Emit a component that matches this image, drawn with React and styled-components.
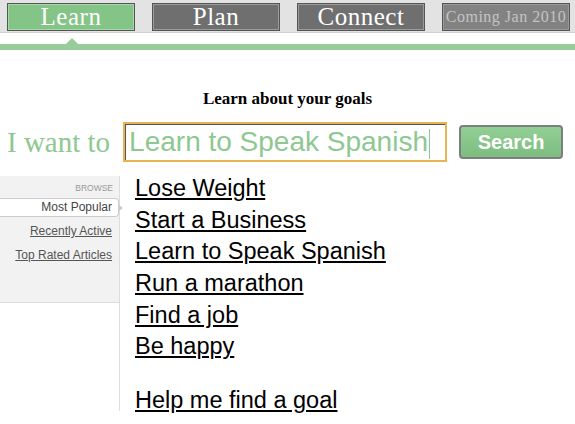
import React from "react";
import styled, { createGlobalStyle } from "styled-components";

const Global = createGlobalStyle`
  body { margin: 0; background: #fff; font-family: "Liberation Serif", serif; }
`;

const NavBar = styled.nav`
  display: flex;
  gap: 17px;
  padding: 3px 0 0 7px;
  height: 29px;
  background: #e3e3e3;
  border-bottom: 1px solid #d0d0d0;
`;

const Tab = styled.div`
  width: 126px;
  height: 26px;
  border: 1px solid #555;
  box-shadow: inset 0 0 0 1px ${(p) => (p.green ? "#a8d8aa" : "#9a9a9a")};
  background: ${(p) => (p.green ? "#84c487" : p.dim ? "#828282" : "#6f6f6f")};
  color: ${(p) => (p.dim ? "#c4c4c4" : "#fff")};
  font-family: "Liberation Serif", serif;
  font-size: ${(p) => (p.dim ? "16px" : "25px")};
  line-height: 26px;
  text-align: center;
  letter-spacing: 0.5px;
`;

const Rule = styled.div`
  position: relative;
  margin-top: 11px;
  height: 6px;
  background: #97cd9a;
  &::before {
    content: "";
    position: absolute;
    left: 66px;
    top: -6px;
    border-left: 6px solid transparent;
    border-right: 6px solid transparent;
    border-bottom: 6px solid #97cd9a;
  }
`;

const Heading = styled.h3`
  margin: 39px 0 0;
  text-align: center;
  font-size: 17px;
  font-weight: bold;
  color: #000;
`;

const SearchRow = styled.div`
  display: flex;
  align-items: center;
  margin-top: 13px;
  padding-left: 7px;
`;

const Want = styled.span`
  font-family: "Liberation Serif", serif;
  font-size: 29px;
  color: #8ec891;
  margin-right: 13px;
`;

const Field = styled.div`
  width: 316px;
  height: 36px;
  border: 2px solid #e8b451;
  box-shadow: inset 1px 1px 0 #555;
  font-family: "Liberation Sans", Arial, sans-serif;
  font-size: 28px;
  line-height: 36px;
  color: #8ec891;
  padding-left: 4px;
  white-space: nowrap;
  overflow: hidden;
`;

const Caret = styled.span`
  display: inline-block;
  width: 1px;
  height: 30px;
  background: #8ec891;
  vertical-align: middle;
  margin-left: 1px;
`;

const Button = styled.div`
  margin-left: 12px;
  width: 100px;
  height: 30px;
  border: 2px solid #7e7e7e;
  border-radius: 4px;
  background: linear-gradient(#92cf94, #7dbd80);
  color: #fff;
  font-family: "Liberation Sans", Arial, sans-serif;
  font-weight: bold;
  font-size: 20px;
  line-height: 30px;
  text-align: center;
`;

const Body = styled.div`
  display: flex;
  margin-top: 14px;
`;

const Side = styled.div`
  width: 135px;
  flex-shrink: 0;
`;

const Browse = styled.div`
  width: 120px;
  height: 127px;
  box-sizing: border-box;
  background: #f2f2f2;
  border-right: 1px solid #ddd;
  border-bottom: 1px solid #ddd;
  padding-top: 7px;
  font-family: "Liberation Sans", Arial, sans-serif;
  text-align: right;
`;

const BrowseTitle = styled.div`
  font-size: 8.5px;
  color: #999;
  padding-right: 6px;
  margin-bottom: 5px;
`;

const SideLink = styled.div`
  position: relative;
  font-size: 12px;
  line-height: 15px;
  color: ${(p) => (p.active ? "#444" : "#555")};
  text-decoration: ${(p) => (p.active ? "none" : "underline")};
  padding: 1px 6px 1px 0;
  margin-bottom: 5px;
  background: ${(p) => (p.active ? "#fff" : "transparent")};
  border: 1px solid ${(p) => (p.active ? "#ccc" : "transparent")};
  border-left: none;
  border-radius: 0 4px 4px 0;
  ${(p) =>
    p.active &&
    `&::after {
      content: "";
      position: absolute;
      right: -5px;
      top: 5px;
      border-top: 4px solid transparent;
      border-bottom: 4px solid transparent;
      border-left: 5px solid #ccc;
    }`}
`;

const Stem = styled.div`
  width: 120px;
  height: 108px;
  border-right: 1px solid #ddd;
  box-sizing: border-box;
`;

const Goals = styled.ul`
  list-style: none;
  margin: 0;
  padding: 0;
  font-family: "Liberation Sans", Arial, sans-serif;
  font-size: 23.5px;
`;

const Goal = styled.li`
  height: 31.7px;
  line-height: 24px;
  margin-top: ${(p) => (p.gap ? "22px" : "0")};
  text-decoration: underline;
  color: #000;
`;

const goals = [
  "Lose Weight",
  "Start a Business",
  "Learn to Speak Spanish",
  "Run a marathon",
  "Find a job",
  "Be happy",
];

export default function App() {
  return (
    <>
      <Global />
      <NavBar>
        <Tab green>Learn</Tab>
        <Tab>Plan</Tab>
        <Tab>Connect</Tab>
        <Tab dim>Coming Jan 2010</Tab>
      </NavBar>
      <Rule />
      <Heading>Learn about your goals</Heading>
      <SearchRow>
        <Want>I want to</Want>
        <Field>
          Learn to Speak Spanish
          <Caret />
        </Field>
        <Button>Search</Button>
      </SearchRow>
      <Body>
        <Side>
          <Browse>
            <BrowseTitle>BROWSE</BrowseTitle>
            <SideLink active>Most Popular</SideLink>
            <SideLink>Recently Active</SideLink>
            <SideLink>Top Rated Articles</SideLink>
          </Browse>
          <Stem />
        </Side>
        <Goals>
          {goals.map((g) => (
            <Goal key={g}>{g}</Goal>
          ))}
          <Goal gap>Help me find a goal</Goal>
        </Goals>
      </Body>
    </>
  );
}
